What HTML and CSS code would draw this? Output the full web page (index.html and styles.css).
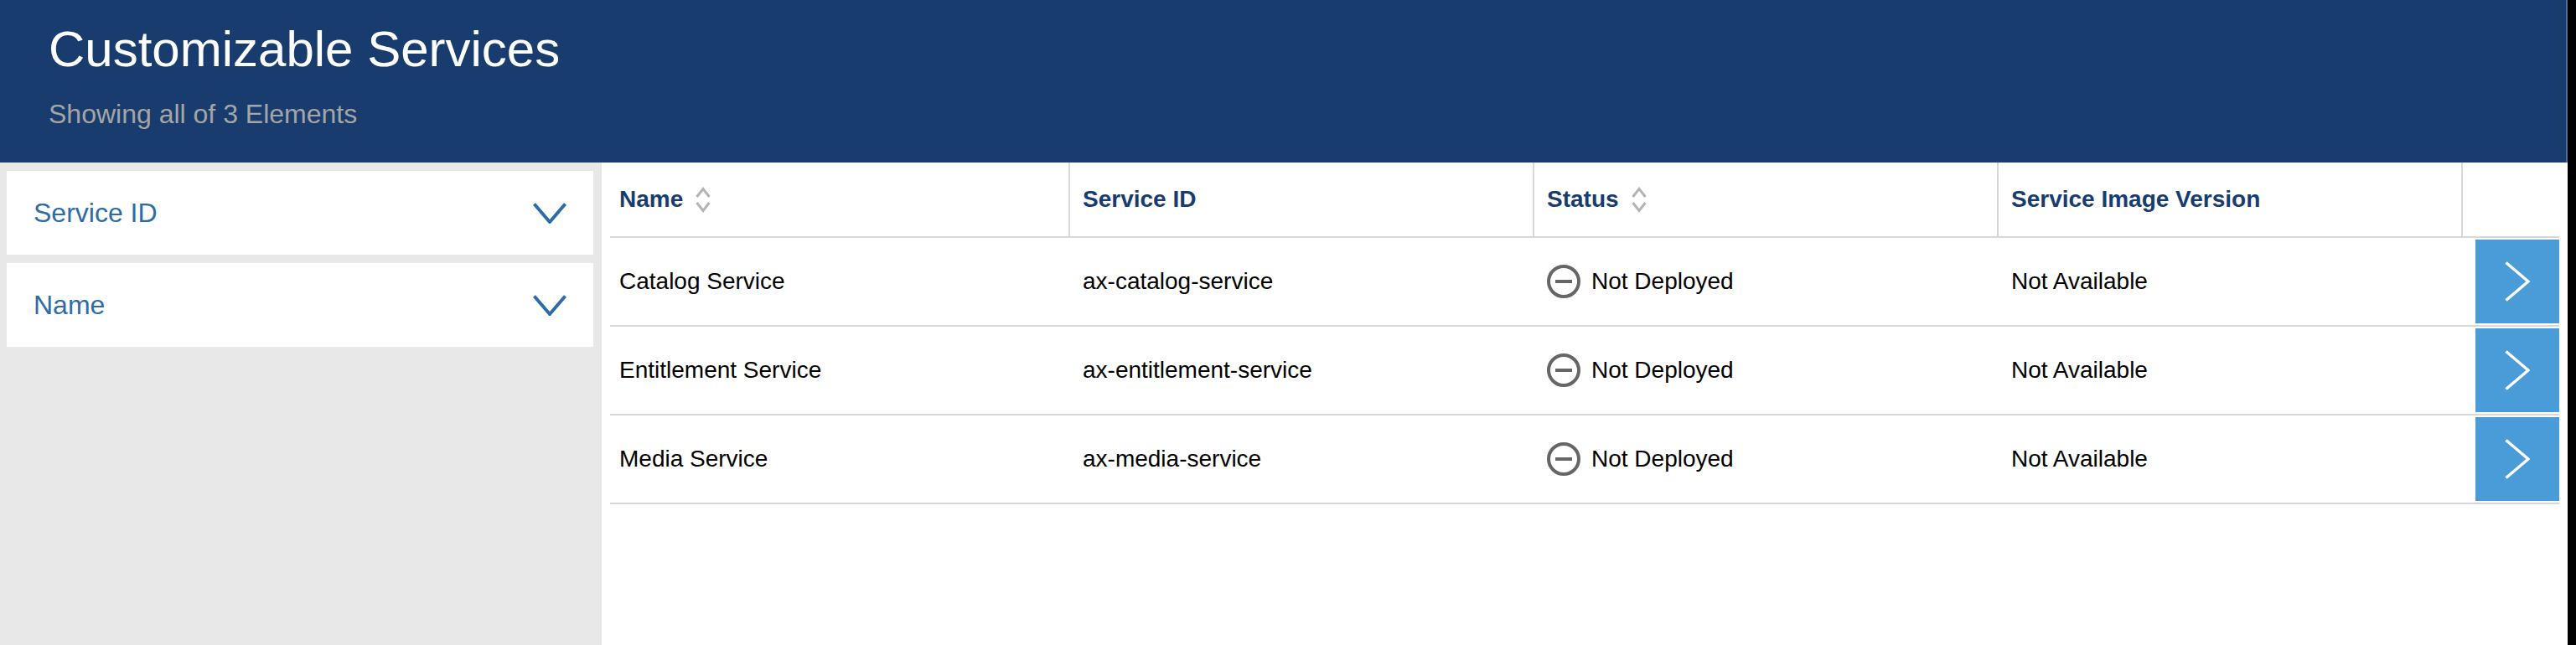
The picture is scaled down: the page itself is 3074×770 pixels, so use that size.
FILE: index.html
```html
<!DOCTYPE html>
<html lang="en">
<head>
    <meta charset="UTF-8">
    <title>Customizable Services</title>
    <link rel="stylesheet" href="styles.css">
</head>
<body>
    <div class="page">
        <header class="page-header">
            <h1>Customizable Services</h1>
            <p>Showing all of 3 Elements</p>
        </header>
        <div class="content">
            <aside class="filters">
                <div class="filter">
                    <span>Service ID</span>
                    <svg class="chevron" viewBox="0 0 40 25"><path d="M1.500 1.500 20 23 38.500 1.500"/></svg>
                </div>
                <div class="filter">
                    <span>Name</span>
                    <svg class="chevron" viewBox="0 0 40 25"><path d="M1.500 1.500 20 23 38.500 1.500"/></svg>
                </div>
            </aside>
            <main class="main">
                <table class="services">
                    <colgroup>
                        <col class="col-name">
                        <col class="col-id">
                        <col class="col-status">
                        <col class="col-version">
                        <col class="col-action">
                    </colgroup>
                    <thead>
                        <tr>
                            <th>
                                <span class="sortable">Name
                                    <svg class="sort" viewBox="0 0 18 31"><path d="M1.500 12 9 2.500 16.500 12M1.500 19 9 28.500 16.500 19"/></svg>
                                </span>
                            </th>
                            <th>Service ID</th>
                            <th>
                                <span class="sortable">Status
                                    <svg class="sort" viewBox="0 0 18 31"><path d="M1.500 12 9 2.500 16.500 12M1.500 19 9 28.500 16.500 19"/></svg>
                                </span>
                            </th>
                            <th>Service Image Version</th>
                            <th></th>
                        </tr>
                    </thead>
                    <tbody>
                        <tr>
                            <td>Catalog Service</td>
                            <td>ax-catalog-service</td>
                            <td>
                                <span class="status">
                                    <svg class="status-icon" viewBox="0 0 40 40"><circle cx="20" cy="20" r="18"/><path d="M10 20H30"/></svg>
                                    Not Deployed
                                </span>
                            </td>
                            <td>Not Available</td>
                            <td class="action">
                                <button class="open"><svg viewBox="0 0 30 48"><path d="M1.500 1.500 28 24 1.500 46.500"/></svg></button>
                            </td>
                        </tr>
                        <tr>
                            <td>Entitlement Service</td>
                            <td>ax-entitlement-service</td>
                            <td>
                                <span class="status">
                                    <svg class="status-icon" viewBox="0 0 40 40"><circle cx="20" cy="20" r="18"/><path d="M10 20H30"/></svg>
                                    Not Deployed
                                </span>
                            </td>
                            <td>Not Available</td>
                            <td class="action">
                                <button class="open"><svg viewBox="0 0 30 48"><path d="M1.500 1.500 28 24 1.500 46.500"/></svg></button>
                            </td>
                        </tr>
                        <tr>
                            <td>Media Service</td>
                            <td>ax-media-service</td>
                            <td>
                                <span class="status">
                                    <svg class="status-icon" viewBox="0 0 40 40"><circle cx="20" cy="20" r="18"/><path d="M10 20H30"/></svg>
                                    Not Deployed
                                </span>
                            </td>
                            <td>Not Available</td>
                            <td class="action">
                                <button class="open"><svg viewBox="0 0 30 48"><path d="M1.500 1.500 28 24 1.500 46.500"/></svg></button>
                            </td>
                        </tr>
                    </tbody>
                </table>
            </main>
        </div>
    </div>
</body>
</html>
```

FILE: styles.css
```css
html, body {
    height: 100%;
}
body {
    margin: 0;
    background-color: #000;
    font-family: "Liberation Sans", Arial, sans-serif;
    overflow: hidden;
}
.page {
    width: 3064px;
    height: 770px;
    background-color: #fff;
    display: flex;
    flex-direction: column;
}
.page-header {
    height: 194px;
    box-sizing: border-box;
    padding: 26px 60px 0 58px;
    border-right: 2px solid #4d6b97;
    background-color: #193c6f;
}
.page-header h1 {
    margin: 0;
    color: #fff;
    font-size: 60px;
    font-weight: normal;
    line-height: 66px;
}
.page-header p {
    margin: 26px 0 0;
    color: #a5a5a5;
    font-size: 32px;
    line-height: 36px;
}
.content {
    flex: 1;
    display: flex;
}
.filters {
    width: 718px;
    box-sizing: border-box;
    padding: 10px 10px 0 8px;
    background-color: #e8e8e8;
    display: flex;
    flex-direction: column;
    gap: 10px;
}
.filter {
    height: 100px;
    box-sizing: border-box;
    padding: 0 32px;
    background-color: #fff;
    color: #2d6ca6;
    font-size: 32px;
    display: flex;
    align-items: center;
    justify-content: space-between;
}
.chevron {
    width: 40px;
    height: 25px;
    fill: none;
    stroke: #2d6ca6;
    stroke-width: 4;
}
.main {
    flex: 1;
    padding: 0 10px;
}
.services {
    width: 2326px;
    table-layout: fixed;
    border-collapse: separate;
    border-spacing: 0;
    font-size: 28px;
}
.col-name { width: 549px; }
.col-id { width: 554px; }
.col-status { width: 554px; }
.col-version { width: 554px; }
.col-action { width: 115px; }
.services th {
    height: 90px;
    box-sizing: border-box;
    padding: 0 0 0 15px;
    border-bottom: 2px solid #d8d8d8;
    border-right: 2px solid #d8d8d8;
    color: #193c6f;
    font-weight: bold;
    text-align: left;
}
.services th:last-child {
    border-right: none;
}
.services td {
    height: 106px;
    box-sizing: border-box;
    padding: 0 0 0 15px;
    border-bottom: 2px solid #d8d8d8;
    color: #000;
}
.services th:first-child,
.services td:first-child {
    padding-left: 11px;
}
.services td.action {
    padding: 2px 0;
    text-align: right;
}
.sortable {
    display: inline-flex;
    align-items: center;
    gap: 15px;
}
.sort {
    width: 18px;
    height: 31px;
    fill: none;
    stroke: #b4b4b4;
    stroke-width: 3;
}
.status {
    display: flex;
    align-items: center;
    gap: 13px;
}
.status-icon {
    width: 40px;
    height: 40px;
    fill: none;
    stroke: #666;
    stroke-width: 4;
}
.open {
    width: 100px;
    height: 100px;
    padding: 0;
    border: none;
    background-color: #4a9cd8;
    display: inline-flex;
    align-items: center;
    justify-content: center;
    vertical-align: top;
}
.open svg {
    width: 30px;
    height: 48px;
    fill: none;
    stroke: #fff;
    stroke-width: 3.5;
}
```
